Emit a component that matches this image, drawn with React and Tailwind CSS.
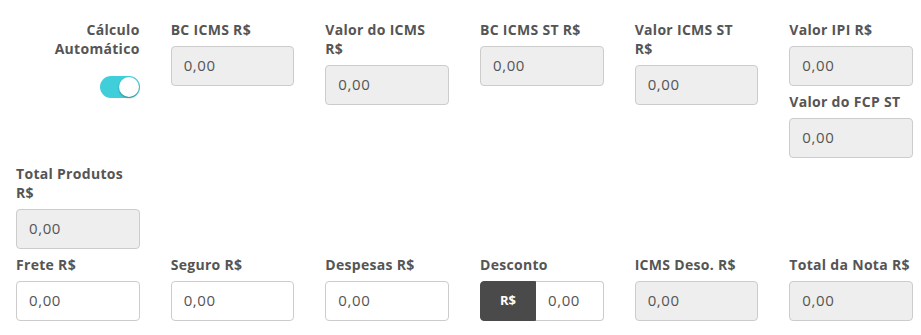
import React from 'react'

const FONT = { fontFamily: '"Open Sans", "Liberation Sans", sans-serif' }

function Label({ children, right }) {
  return (
    <div className={`text-[14px] font-bold leading-[19px] tracking-[0.3px] text-[#555] mb-[7px] ${right ? 'text-right' : ''}`}>
      {children}
    </div>
  )
}

function Field({ label, disabled = true, value = '0,00' }) {
  return (
    <div className="mb-[6px]">
      <Label>{label}</Label>
      <input
        readOnly
        value={value}
        className={`w-full h-[40px] px-[12px] pb-[2px] rounded-[4px] border border-[#cccccc] text-[15px] tracking-[0.6px] text-[#555] outline-none ${disabled ? 'bg-[#eeeeee]' : 'bg-white'}`}
      />
    </div>
  )
}

function Toggle() {
  return (
    <div className="flex justify-end mt-[18px]">
      <div className="w-[40px] h-[22px] rounded-full bg-[#40cfda] relative">
        <div className="absolute right-[1px] top-[1px] w-[20px] h-[20px] rounded-full bg-white shadow-[0_1px_2px_rgba(0,0,0,0.35)]" />
      </div>
    </div>
  )
}

export default function App() {
  return (
    <div style={FONT} className="w-[921px] h-[335px] bg-white pt-[20px] pl-[16px] pr-[8px] overflow-hidden">
      <div className="grid grid-cols-6 gap-x-[31px] items-start">
        <div>
          <Label right>Cálculo<br />Automático</Label>
          <Toggle />
        </div>
        <Field label="BC ICMS R$" />
        <Field label={<>Valor do ICMS<br />R$</>} />
        <Field label="BC ICMS ST R$" />
        <Field label={<>Valor ICMS ST<br />R$</>} />
        <div>
          <Field label="Valor IPI R$" />
          <Field label="Valor do FCP ST" />
        </div>
      </div>
      <div className="grid grid-cols-6 gap-x-[31px] items-start">
        <Field label={<>Total Produtos<br />R$</>} />
      </div>
      <div className="grid grid-cols-6 gap-x-[31px] items-start">
        <Field label="Frete R$" disabled={false} />
        <Field label="Seguro R$" disabled={false} />
        <Field label="Despesas R$" disabled={false} />
        <div className="mb-[6px]">
          <Label>Desconto</Label>
          <div className="flex h-[40px]">
            <span className="w-[56px] shrink-0 flex items-center justify-center bg-[#4a4a4a] border border-[#4a4a4a] rounded-l-[4px] text-white text-[13px] font-bold">
              R$
            </span>
            <input
              readOnly
              value="0,00"
              className="min-w-0 w-full h-full px-[12px] pb-[2px] rounded-r-[4px] border border-l-0 border-[#cccccc] bg-white text-[15px] tracking-[0.6px] text-[#555] outline-none"
            />
          </div>
        </div>
        <Field label="ICMS Deso. R$" />
        <Field label="Total da Nota R$" />
      </div>
    </div>
  )
}
